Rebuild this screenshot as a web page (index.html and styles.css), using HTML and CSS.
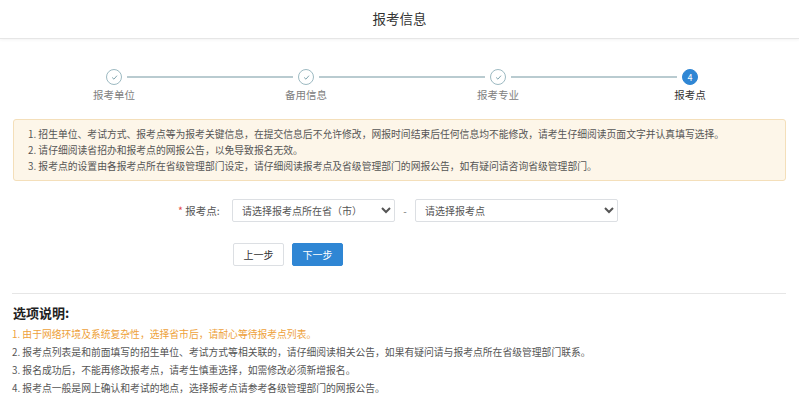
FILE: index.html
```html
<!DOCTYPE html>
<html lang="zh-CN">

<head>
    <meta charset="UTF-8">
    <meta name="viewport" content="width=device-width, initial-scale=1">
    <title>报考信息</title>
    <link rel="stylesheet" href="styles.css">
</head>

<body>

    <div class="header">报考信息</div>

    <div class="steps">
        <div class="step done">
            <span class="dot">
                <svg width="7" height="7" viewBox="0 0 10 10"><path d="M2 5.3 L4.2 7.4 L8.2 2.8" fill="none" stroke="#7fa3ad" stroke-width="1.4" stroke-linecap="round" stroke-linejoin="round"/></svg>
            </span>
            <span class="step-name">报考单位</span>
        </div>
        <div class="step done">
            <span class="dot">
                <svg width="7" height="7" viewBox="0 0 10 10"><path d="M2 5.3 L4.2 7.4 L8.2 2.8" fill="none" stroke="#7fa3ad" stroke-width="1.4" stroke-linecap="round" stroke-linejoin="round"/></svg>
            </span>
            <span class="step-name">备用信息</span>
        </div>
        <div class="step done">
            <span class="dot">
                <svg width="7" height="7" viewBox="0 0 10 10"><path d="M2 5.3 L4.2 7.4 L8.2 2.8" fill="none" stroke="#7fa3ad" stroke-width="1.4" stroke-linecap="round" stroke-linejoin="round"/></svg>
            </span>
            <span class="step-name">报考专业</span>
        </div>
        <div class="step active">
            <span class="dot">4</span>
            <span class="step-name">报考点</span>
        </div>
    </div>

    <div class="notice">
        <p>1. 招生单位、考试方式、报考点等为报考关键信息，在提交信息后不允许修改，网报时间结束后任何信息均不能修改，请考生仔细阅读页面文字并认真填写选择。</p>
        <p>2. 请仔细阅读省招办和报考点的网报公告，以免导致报名无效。</p>
        <p>3. 报考点的设置由各报考点所在省级管理部门设定，请仔细阅读报考点及省级管理部门的网报公告，如有疑问请咨询省级管理部门。</p>
    </div>

    <div class="form-row">
        <label class="form-label"><span class="star">*</span> 报考点:</label>
        <select class="sel sel-prov">
            <option>请选择报考点所在省（市）</option>
        </select>
        <span class="dash">-</span>
        <select class="sel sel-site">
            <option>请选择报考点</option>
        </select>
    </div>

    <div class="actions">
        <button class="btn">上一步</button>
        <button class="btn btn-primary">下一步</button>
    </div>

    <div class="explain">
        <h3>选项说明:</h3>
        <p class="warn">1. 由于网络环境及系统复杂性，选择省市后，请耐心等待报考点列表。</p>
        <p>2. 报考点列表是和前面填写的招生单位、考试方式等相关联的，请仔细阅读相关公告，如果有疑问请与报考点所在省级管理部门联系。</p>
        <p>3. 报名成功后，不能再修改报考点，请考生慎重选择，如需修改必须新增报名。</p>
        <p>4. 报考点一般是网上确认和考试的地点，选择报考点请参考各级管理部门的网报公告。</p>
    </div>

</body>

</html>
```

FILE: styles.css
```css
:root {
    --primary: #2f86d4;
    --text: #555;
    --muted: #808080;
    --line: #b9cbd0;
    --border: #dcdfe3;
}

body {
    margin: 0;
    padding: 0;
    font-family: "Noto Sans CJK SC", "Noto Sans", sans-serif;
    background-color: #ffffff;
    color: var(--text);
}

.header {
    height: 38px;
    line-height: 36px;
    text-align: center;
    font-size: 13.5px;
    color: #333;
    border-bottom: 1px solid #e6e6e6;
    box-shadow: 0 1px 3px rgba(0, 0, 0, 0.05);
}

.steps {
    display: grid;
    grid-template-columns: repeat(4, 192px);
    margin: 30px 0 0 18px;
}

.step {
    position: relative;
    display: flex;
    flex-direction: column;
    align-items: center;
}

.step:not(:last-child)::after {
    content: "";
    position: absolute;
    top: 7px;
    left: calc(50% + 13px);
    width: 166px;
    height: 2px;
    background-color: var(--line);
}

.dot {
    width: 14px;
    height: 14px;
    border-radius: 50%;
    border: 1px solid #9dbac2;
    background: #fff;
    display: flex;
    align-items: center;
    justify-content: center;
    font-size: 9px;
    line-height: 1;
}

.step.active .dot {
    background-color: var(--primary);
    border-color: var(--primary);
    color: #fff;
}

.step-name {
    margin-top: 2px;
    font-size: 10.5px;
    color: var(--muted);
}

.step.active .step-name {
    color: #333;
}

.notice {
    margin: 17px 13px 0;
    padding: 6px 14px;
    background-color: #fdf6e9;
    border: 1px solid #f4dfba;
    border-radius: 3px;
}

.notice p {
    margin: 0;
    font-size: 9.8px;
    line-height: 16px;
    color: #555;
}

.form-row {
    display: flex;
    align-items: center;
    margin-top: 18px;
    padding-left: 178px;
}

.form-label {
    font-size: 10.5px;
    color: #555;
    width: 54px;
}

.star {
    color: #e54b4b;
}

.sel {
    height: 23px;
    border: 1px solid var(--border);
    border-radius: 2px;
    background: #fff;
    font-family: inherit;
    font-size: 10px;
    color: #555;
    padding: 0 5px;
}

.sel-prov {
    width: 163px;
}

.sel-site {
    width: 203px;
}

.dash {
    width: 20px;
    text-align: center;
    font-size: 10px;
    color: #777;
}

.actions {
    display: flex;
    gap: 8px;
    margin-top: 21px;
    padding-left: 233px;
}

.btn {
    width: 51px;
    height: 23px;
    border: 1px solid var(--border);
    border-radius: 2px;
    background: #fff;
    font-family: inherit;
    font-size: 10px;
    color: #333;
    cursor: pointer;
}

.btn-primary {
    background-color: var(--primary);
    border-color: var(--primary);
    color: #fff;
}

.explain {
    margin: 27px 13px 0 12px;
    border-top: 1px solid #e6e6e6;
    padding-top: 9px;
}

.explain h3 {
    margin: 0 0 3px 1px;
    font-size: 13px;
    font-weight: bold;
    color: #222;
}

.explain p {
    margin: 0;
    font-size: 9.8px;
    line-height: 18px;
    color: #555;
}

.explain .warn {
    color: #eea13a;
}
```
